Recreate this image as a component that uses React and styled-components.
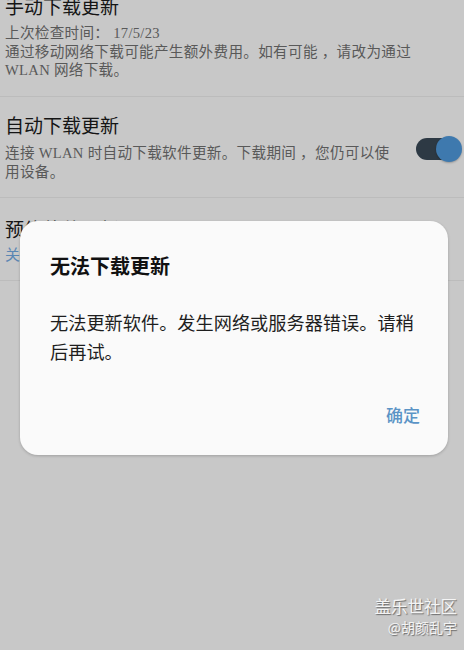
import React from "react";
import styled, { createGlobalStyle } from "styled-components";

const Global = createGlobalStyle`
  html, body { margin: 0; padding: 0; }
  body {
    background: #c8c8c8;
    font-family: "Liberation Serif", "Noto Sans CJK SC", serif;
    width: 464px;
    height: 650px;
    overflow: hidden;
  }
`;

const Screen = styled.div`
  position: relative;
  width: 464px;
  height: 650px;
  background: #c8c8c8;
  overflow: hidden;
`;

const List = styled.div`
  display: flex;
  flex-direction: column;
  margin-top: -3px;
`;

const Row = styled.div`
  display: flex;
  align-items: center;
  gap: 12px;
  padding: ${(p) => p.$pad || "18px 0 16px 5px"};
  border-bottom: 1px solid #bcbcbc;
`;

const RowText = styled.div`
  flex: 1;
  display: flex;
  flex-direction: column;
  gap: ${(p) => p.$gap || "5px"};
`;

const Title = styled.div`
  font-size: 19px;
  line-height: 22px;
  color: #151515;
`;

const Sub = styled.div`
  font-size: 14.6px;
  line-height: ${(p) => p.$lh || "18.5px"};
  color: #595959;
  letter-spacing: 0.3px;
`;

const Value = styled.div`
  font-size: 15px;
  line-height: 19px;
  color: #5a86b3;
`;

const Toggle = styled.div`
  position: relative;
  width: 46px;
  height: 26px;
  flex-shrink: 0;
`;

const Track = styled.div`
  position: absolute;
  left: 0;
  top: 2px;
  width: 36px;
  height: 22px;
  border-radius: 11px;
  background: #2d3944;
`;

const Thumb = styled.div`
  position: absolute;
  right: 0;
  top: 0;
  width: 26px;
  height: 26px;
  border-radius: 50%;
  background: #3e79ae;
  box-shadow: 0 1px 2px rgba(0, 0, 0, 0.25);
`;

const Dialog = styled.div`
  position: absolute;
  left: 20px;
  top: 221px;
  width: 428px;
  height: 234px;
  box-sizing: border-box;
  border-radius: 18px;
  background: #fafafa;
  box-shadow: 0 1px 3px rgba(0, 0, 0, 0.2);
  padding: 34px 28px 0 30px;
  display: flex;
  flex-direction: column;
`;

const DialogTitle = styled.div`
  font-size: 20px;
  line-height: 24px;
  font-weight: bold;
  color: #111;
`;

const DialogBody = styled.div`
  margin-top: 31px;
  font-size: 18.2px;
  line-height: 29px;
  color: #1e1e1e;
`;

const Actions = styled.div`
  display: flex;
  justify-content: flex-end;
  margin-top: 39px;
`;

const ActionButton = styled.div`
  font-size: 17px;
  line-height: 20px;
  font-weight: 500;
  color: #5b94c6;
`;

const Watermark = styled.div`
  position: absolute;
  right: 7px;
  bottom: 13px;
  display: flex;
  flex-direction: column;
  align-items: flex-end;
  font-family: "Noto Sans CJK SC", sans-serif;
  color: #f4f4f4;
  text-shadow: 1px 1px 1px rgba(70, 70, 70, 0.7);
`;

const WmMain = styled.div`
  font-size: 16.5px;
  line-height: 20px;
`;

const WmSub = styled.div`
  font-size: 14px;
  line-height: 20px;
  margin-top: 1px;
`;

export default function App() {
  return (
    <Screen>
      <Global />
      <List>
        <Row $pad="0 0 16px 5px">
          <RowText $gap="5px">
            <Title>手动下载更新</Title>
            <Sub>
              上次检查时间： 17/5/23
              <br />
              通过移动网络下载可能产生额外费用。如有可能 ，请改为通过
              <br />
              WLAN 网络下载。
            </Sub>
          </RowText>
        </Row>
        <Row $pad="19px 2px 15px 5px">
          <RowText $gap="6px">
            <Title>自动下载更新</Title>
            <Sub $lh="19px">
              连接 WLAN 时自动下载软件更新。下载期间 ，您仍可以使
              <br />
              用设备。
            </Sub>
          </RowText>
          <Toggle>
            <Track />
            <Thumb />
          </Toggle>
        </Row>
        <Row $pad="22px 0 15px 5px">
          <RowText $gap="4px">
            <Title>预约软件更新</Title>
            <Value>关</Value>
          </RowText>
        </Row>
      </List>
      <Dialog>
        <DialogTitle>无法下载更新</DialogTitle>
        <DialogBody>
          无法更新软件。发生网络或服务器错误。请稍后再试。
        </DialogBody>
        <Actions>
          <ActionButton>确定</ActionButton>
        </Actions>
      </Dialog>
      <Watermark>
        <WmMain>盖乐世社区</WmMain>
        <WmSub>@胡颜乱宇</WmSub>
      </Watermark>
    </Screen>
  );
}
